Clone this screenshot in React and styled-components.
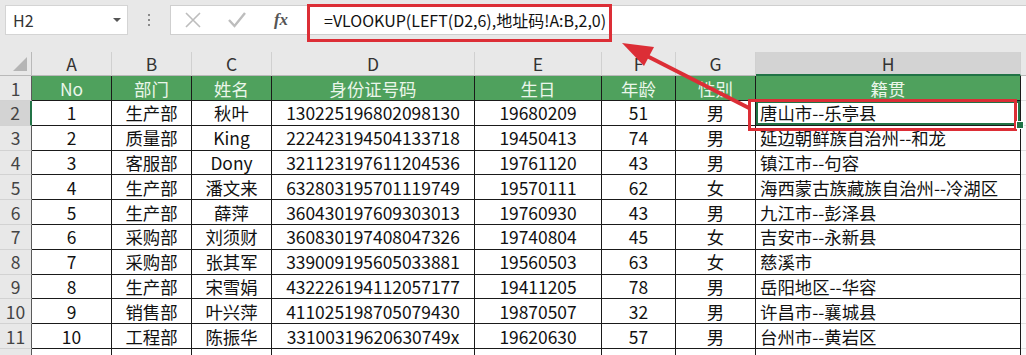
import React from "react";
import styled, { createGlobalStyle, css } from "styled-components";

const GlobalStyle = createGlobalStyle`
  html, body {
    margin: 0;
    padding: 0;
    overflow: hidden;
    background: #ffffff;
  }
  * {
    box-sizing: border-box;
  }
`;

const FONT = `"Noto Sans CJK SC", "Noto Sans", sans-serif`;
const GREEN = "#217346";
const RED = "#dc2e36";

const Page = styled.div`
  position: relative;
  width: 1026px;
  height: 355px;
  font-family: ${FONT};
  background: #e8e8e8;
  overflow: hidden;
`;

const Toolbar = styled.div`
  display: flex;
  align-items: center;
  height: 52px;
  padding: 0 0 12px 5px;
`;

const NameBox = styled.div`
  display: flex;
  align-items: center;
  justify-content: space-between;
  width: 123px;
  height: 30px;
  padding: 0 6px 0 7px;
  background: #fff;
  border: 1px solid #d4d4d4;
  font-size: 16px;
  color: #333;
`;

const Caret = styled.span`
  width: 0;
  height: 0;
  border-left: 4px solid transparent;
  border-right: 4px solid transparent;
  border-top: 4px solid #555;
`;

const Dots = styled.div`
  display: flex;
  flex-direction: column;
  align-items: center;
  gap: 3px;
  width: 42px;
`;

const Dot = styled.span`
  width: 2px;
  height: 2px;
  background: #8a8a8a;
`;

const FormulaBox = styled.div`
  flex: 1;
  display: flex;
  align-items: center;
  height: 30px;
  background: #fff;
  border: 1px solid #cfcfcf;
  border-right: none;
`;

const IconSlot = styled.div`
  display: flex;
  align-items: center;
  justify-content: center;
  width: 44px;
  height: 100%;
  color: #b8b8b8;
`;

const Fx = styled.span`
  font-family: "Liberation Serif", "DejaVu Serif", serif;
  font-style: italic;
  font-weight: bold;
  font-size: 17px;
  color: #555;
`;

const FormulaText = styled.div`
  padding-left: 21px;
  font-size: 16px;
  color: #111;
  white-space: nowrap;
`;

const Sheet = styled.div`
  display: grid;
  grid-template-columns: 32px 80px 80px 80px 203px 127px 74px 80px 265px 1fr;
  grid-template-rows: 24px 25px repeat(11, 24.8px);
  background: #fff;
`;

const Cell = styled.div`
  position: relative;
  display: flex;
  align-items: center;
  justify-content: ${(p) => (p.$left ? "flex-start" : "center")};
  padding: ${(p) => (p.$left ? "0 0 0 4px" : "0")};
  font-size: 17.4px;
  color: #111;
  white-space: nowrap;
  overflow: hidden;
  border-right: 1px solid #1a1a1a;
  border-bottom: 1px solid #1a1a1a;

  ${(p) =>
    p.$head &&
    css`
      background: #4fa15d;
      color: #eaf6ea;
    `}

  ${(p) =>
    p.$selected &&
    css`
      overflow: visible;
      box-shadow: inset 0 0 0 2px ${GREEN};
      &::after {
        content: "";
        position: absolute;
        right: -4px;
        bottom: -4px;
        width: 6px;
        height: 6px;
        background: ${GREEN};
        border: 1px solid #fff;
        z-index: 2;
      }
    `}
`;

const ColHead = styled.div`
  display: flex;
  align-items: center;
  justify-content: center;
  font-size: 17.5px;
  color: #333;
  background: ${(p) => (p.$active ? "#d3d3d3" : "#e8e8e8")};
  border-right: 1px solid #d0d0d0;
  border-bottom: ${(p) => (p.$active ? `2px solid ${GREEN}` : "1px solid #b9b9b9")};
`;

const Corner = styled.div`
  position: relative;
  background: #e8e8e8;
  border-right: 1px solid #b9b9b9;
  border-bottom: 1px solid #b9b9b9;
  &::after {
    content: "";
    position: absolute;
    right: 4px;
    bottom: 4px;
    width: 0;
    height: 0;
    border-left: 14px solid transparent;
    border-bottom: 14px solid #b5b5b5;
  }
`;

const RowHead = styled.div`
  display: flex;
  align-items: center;
  justify-content: center;
  font-size: 17.5px;
  color: #444;
  background: ${(p) => (p.$active ? "#d3d3d3" : "#e8e8e8")};
  border-bottom: 1px solid #d2d2d2;
  border-right: ${(p) => (p.$active ? `2px solid ${GREEN}` : "1px solid #5a5a5a")};
`;

const Filler = styled.div`
  background: ${(p) => (p.$gray ? "#e8e8e8" : "#fafafa")};
  border-bottom: 1px solid ${(p) => (p.$gray ? "#b9b9b9" : "#e0e0e0")};
`;

const Overlay = styled.svg`
  position: absolute;
  top: 0;
  left: 0;
  pointer-events: none;
`;

const RedFrame = styled.div`
  position: absolute;
  left: ${(p) => p.$x}px;
  top: ${(p) => p.$y}px;
  width: ${(p) => p.$w}px;
  height: ${(p) => p.$h}px;
  border: 3px solid ${RED};
  pointer-events: none;
`;

const COLS = ["A", "B", "C", "D", "E", "F", "G", "H"];
const HEAD = ["No", "部门", "姓名", "身份证号码", "生日", "年龄", "性别", "籍贯"];

const ROWS = [
  [1, "生产部", "秋叶", "130225196802098130", "19680209", 51, "男", "唐山市--乐亭县"],
  [2, "质量部", "King", "222423194504133718", "19450413", 74, "男", "延边朝鲜族自治州--和龙"],
  [3, "客服部", "Dony", "321123197611204536", "19761120", 43, "男", "镇江市--句容"],
  [4, "生产部", "潘文来", "632803195701119749", "19570111", 62, "女", "海西蒙古族藏族自治州--冷湖区"],
  [5, "生产部", "薛萍", "360430197609303013", "19760930", 43, "男", "九江市--彭泽县"],
  [6, "采购部", "刘须财", "360830197408047326", "19740804", 45, "女", "吉安市--永新县"],
  [7, "采购部", "张其军", "339009195605033881", "19560503", 63, "女", "慈溪市"],
  [8, "生产部", "宋雪娟", "432226194112057177", "19411205", 78, "男", "岳阳地区--华容"],
  [9, "销售部", "叶兴萍", "411025198705079430", "19870507", 32, "男", "许昌市--襄城县"],
  [10, "工程部", "陈振华", "33100319620630749x", "19620630", 57, "男", "台州市--黄岩区"],
  ["", "", "", "", "", "", "", ""],
];

const CloseIcon = () => (
  <svg width="18" height="18" viewBox="0 0 18 18">
    <path d="M2 2 L16 16 M16 2 L2 16" stroke="#bdbdbd" strokeWidth="1.6" fill="none" />
  </svg>
);

const CheckIcon = () => (
  <svg width="20" height="18" viewBox="0 0 20 18">
    <path d="M2 9 L7.5 15 L18 2" stroke="#bdbdbd" strokeWidth="2.4" fill="none" />
  </svg>
);

export default function App() {
  return (
    <Page>
      <GlobalStyle />
      <Toolbar>
        <NameBox>
          H2
          <Caret />
        </NameBox>
        <Dots>
          <Dot />
          <Dot />
          <Dot />
        </Dots>
        <FormulaBox>
          <IconSlot>
            <CloseIcon />
          </IconSlot>
          <IconSlot>
            <CheckIcon />
          </IconSlot>
          <IconSlot>
            <Fx>fx</Fx>
          </IconSlot>
          <FormulaText>=VLOOKUP(LEFT(D2,6),地址码!A:B,2,0)</FormulaText>
        </FormulaBox>
      </Toolbar>

      <Sheet>
        <Corner />
        {COLS.map((c) => (
          <ColHead key={c} $active={c === "H"}>
            {c}
          </ColHead>
        ))}
        <Filler $gray />

        <RowHead>1</RowHead>
        {HEAD.map((h) => (
          <Cell key={h} $head>
            {h}
          </Cell>
        ))}
        <Filler />

        {ROWS.map((row, r) => (
          <React.Fragment key={r}>
            <RowHead $active={r === 0}>{r < 10 ? r + 2 : ""}</RowHead>
            {row.map((v, c) => (
              <Cell key={c} $left={c === 7} $selected={r === 0 && c === 7}>
                {v}
              </Cell>
            ))}
            <Filler />
          </React.Fragment>
        ))}
      </Sheet>

      <RedFrame $x={307} $y={4} $w={305} $h={38} />
      <RedFrame $x={748} $y={99} $w={269} $h={32} />

      <Overlay width="1026" height="355" viewBox="0 0 1026 355">
        <line x1="749" y1="108" x2="645" y2="55" stroke={RED} strokeWidth="4" />
        <polygon points="622,43 654,47 644,66" fill={RED} />
      </Overlay>
    </Page>
  );
}
